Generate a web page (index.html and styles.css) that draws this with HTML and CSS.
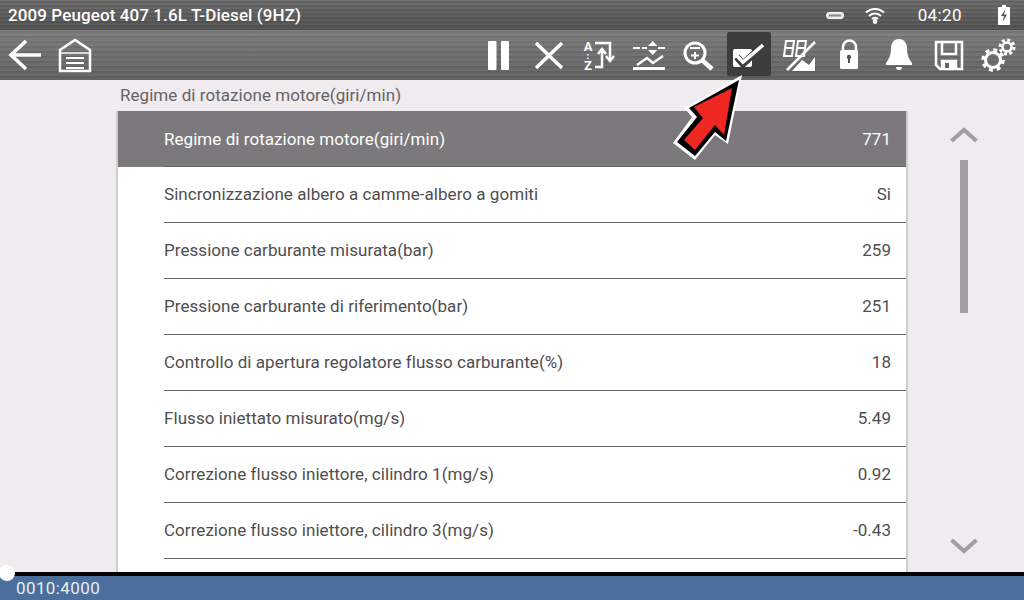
FILE: index.html
```html
<!DOCTYPE html>
<html lang="en">
<head>
    <meta charset="UTF-8">
    <title>Live Data</title>
    <link rel="stylesheet" href="styles.css">
</head>
<body>

    <!-- Status Bar -->
    <div class="status-bar">
        <span class="vehicle">2009 Peugeot 407 1.6L T-Diesel (9HZ)</span>
        <div class="status-right">
            <svg class="st-usb" width="18" height="7" viewBox="0 0 18 7"><rect x="0.7" y="0.7" width="16.6" height="5.6" rx="2.5" fill="#ddd" stroke="#fff" stroke-width="1.2"/><rect x="3" y="2.6" width="12" height="1.8" fill="#8a8a8a"/></svg>
            <svg class="st-wifi" width="20" height="18" viewBox="0 0 20 18" fill="none" stroke="#fff" stroke-width="2"><path d="M1 6.500a13 13 0 0 1 18 0"/><path d="M4 10a8.600 8.600 0 0 1 12 0"/><path d="M7 13a4 4 0 0 1 6 0"/><circle cx="10" cy="15.500" r="2.400" fill="#fff" stroke="none"/></svg>
            <span class="clock">04:20</span>
            <svg class="st-batt" width="12" height="20" viewBox="0 0 12 20"><path d="M4 0h4v2h4v18H0V2h4z" fill="#fff"/><path d="M7.500 4L3 11h3l-1.500 6L9 9.500H6z" fill="#555"/></svg>
        </div>
    </div>

    <!-- Toolbar -->
    <div class="toolbar">
        <div class="tool-group">
            <div class="tool">
                <svg viewBox="0 0 44 44" fill="none" stroke="#fff" stroke-width="3.500"><path d="M38 23H9"/><path d="M23 9L8 23l15 14"/></svg>
            </div>
            <div class="tool">
                <svg viewBox="0 0 44 44" fill="none" stroke="#fff" stroke-width="2.500"><path d="M7 39V18L22 8l15 10v21z"/><path d="M8 21h28" stroke-width="1.500"/><path d="M13 26h18M13 31h18M13 36h18" stroke-width="2"/></svg>
            </div>
        </div>
        <div class="tool-group">
            <div class="tool">
                <svg viewBox="0 0 44 44" fill="#fff"><rect x="11" y="9" width="8.500" height="29" rx="1"/><rect x="24" y="9" width="8" height="29" rx="1"/></svg>
            </div>
            <div class="tool">
                <svg viewBox="0 0 44 44" fill="none" stroke="#fff" stroke-width="3.500"><path d="M9 11l26 25M35 11L9 36"/></svg>
            </div>
            <div class="tool">
                <svg viewBox="0 0 44 44" fill="none" stroke="#fff" stroke-width="2.500"><text x="11" y="19" class="az" text-anchor="middle">A</text><text x="11" y="38" class="az" text-anchor="middle">Z</text><path d="M11 22v1.500M11 25.500v1.500" stroke-width="1.500"/><path d="M18 35h7V19"/><path d="M21 22l4-5 4 5"/><path d="M18 11h15v17"/><path d="M29 24l4 5 4-5"/></svg>
            </div>
            <div class="tool">
                <svg viewBox="0 0 44 44" fill="none" stroke="#fff" stroke-width="2.500"><path d="M6 16h7M15 16h5M31 16h7" stroke-width="2"/><path d="M21 14l4.700-5 4.700 5zM21 18l4.700 5 4.700-5z" fill="#fff" stroke="none"/><path d="M10 33l10-7 6 5 10-7"/><path d="M6 36.500h32" stroke-width="3"/></svg>
            </div>
            <div class="tool">
                <svg viewBox="0 0 44 44" fill="none" stroke="#fff" stroke-width="3"><circle cx="18" cy="21" r="10"/><path d="M25 28l10 9" stroke-width="4.500"/><path d="M13 16h10M18 20v7M14 23.500h8" stroke-width="2"/></svg>
            </div>
            <div class="tool tool-active">
                <svg viewBox="0 0 44 44"><rect x="6" y="17" width="19" height="18" rx="2" fill="#fff"/><path d="M10 25l6 7 20-19" fill="none" stroke="#3d3d3d" stroke-width="7"/><path d="M10 24l6 6 20-17" fill="none" stroke="#fff" stroke-width="3.500"/></svg>
            </div>
            <div class="tool">
                <svg viewBox="0 0 44 44" fill="none" stroke="#fff" stroke-width="2"><path d="M9 9h8l-2 15H7zM8 16h8M21 9h8l-2 15h-8zM20 16h8"/><path d="M10 38L38 10" stroke-width="2.500"/><path d="M15 39l10-11 7 5 6-8v14z" fill="#fff" stroke="none"/></svg>
            </div>
            <div class="tool">
                <svg viewBox="0 0 44 44" fill="none" stroke="#fff" stroke-width="2.500"><path d="M16 19v-4a6 6 0 0 1 13 0v4"/><rect x="13" y="18" width="18" height="19" rx="1.500" fill="#fff" stroke="none"/><circle cx="22" cy="25" r="2.200" fill="#555" stroke="none"/><rect x="21" y="25" width="2" height="6" fill="#555" stroke="none"/></svg>
            </div>
            <div class="tool">
                <svg viewBox="0 0 44 44" fill="#fff"><path d="M22 7c5 0 8 4 8 9 0 7 2 11 5 15v2H9v-2c3-4 5-8 5-15 0-5 3-9 8-9z"/><path d="M19 35h6a3 3 0 0 1-6 0z"/></svg>
            </div>
            <div class="tool">
                <svg viewBox="0 0 44 44" fill="none" stroke="#fff" stroke-width="2.500"><path d="M9 10h26v27H13l-4-4z"/><path d="M15 10v12h14V10"/><path d="M15 37v-8h14v8" fill="#fff"/><rect x="18" y="31" width="4" height="5" fill="#666" stroke="none"/></svg>
            </div>
            <div class="tool">
                <svg viewBox="0 0 44 44" fill="none" stroke="#fff"><circle cx="16" cy="28" r="7.500" stroke-width="3"/><circle cx="16" cy="28" r="10" stroke-width="3.500" stroke-dasharray="3.900 3.950"/><circle cx="30" cy="15" r="4.500" stroke-width="2.500"/><circle cx="30" cy="15" r="7" stroke-width="3" stroke-dasharray="3 2.500"/></svg>
            </div>
        </div>
    </div>

    <!-- Data List -->
    <div class="main">
        <div class="list-area">
            <div class="list-title">Regime di rotazione motore(giri/min)</div>
            <div class="list">
                <div class="row row-selected"><div class="row-inner"><span>Regime di rotazione motore(giri/min)</span><span>771</span></div></div>
                <div class="row"><div class="row-inner"><span>Sincronizzazione albero a camme-albero a gomiti</span><span>Si</span></div></div>
                <div class="row"><div class="row-inner"><span>Pressione carburante misurata(bar)</span><span>259</span></div></div>
                <div class="row"><div class="row-inner"><span>Pressione carburante di riferimento(bar)</span><span>251</span></div></div>
                <div class="row"><div class="row-inner"><span>Controllo di apertura regolatore flusso carburante(%)</span><span>18</span></div></div>
                <div class="row"><div class="row-inner"><span>Flusso iniettato misurato(mg/s)</span><span>5.49</span></div></div>
                <div class="row"><div class="row-inner"><span>Correzione flusso iniettore, cilindro 1(mg/s)</span><span>0.92</span></div></div>
                <div class="row"><div class="row-inner"><span>Correzione flusso iniettore, cilindro 3(mg/s)</span><span>-0.43</span></div></div>
                <div class="row"><div class="row-inner"></div></div>
            </div>
        </div>
        <div class="scroll-col">
            <div class="scroll-top">
                <svg width="28" height="16" viewBox="0 0 28 16" fill="none" stroke="#a09ea0" stroke-width="4"><path d="M1.500 14L14 3l12.500 11"/></svg>
                <div class="scroll-thumb"></div>
            </div>
            <svg width="28" height="16" viewBox="0 0 28 16" fill="none" stroke="#a09ea0" stroke-width="4"><path d="M1.500 2L14 13 26.500 2"/></svg>
        </div>
    </div>

    <!-- Footer -->
    <div class="footer">
        <div class="progress"><div class="knob"></div></div>
        <div class="counter">0010:4000</div>
    </div>

    <!-- Red callout arrow over the screen -->
    <svg class="callout" width="100" height="100" viewBox="0 0 100 100">
        <path d="M82 5L24 38l8 9-19 26 22 17 20-25 13 9z" fill="#fff"/>
        <path d="M79 10L29 38l8 9-20 25 18 14 20-24 11 9z" fill="#000"/>
        <path d="M72 18L34 37l9 11-19 22 11 10 20-25 9 10z" fill="#ee2722"/>
    </svg>

</body>
</html>
```

FILE: styles.css
```css
body {
    margin: 0;
    width: 1024px;
    height: 600px;
    overflow: hidden;
    display: flex;
    flex-direction: column;
    position: relative;
    font-family: Roboto, sans-serif;
    background-color: #efebef;
}

/* Status Bar */
.status-bar {
    height: 30px;
    display: flex;
    justify-content: space-between;
    align-items: center;
    padding: 0 14px 0 8px;
    color: #fff;
    background:
        repeating-linear-gradient(180deg, rgba(255, 255, 255, 0.05) 0 1px, rgba(0, 0, 0, 0.05) 1px 3px, rgba(255, 255, 255, 0.03) 3px 4px),
        linear-gradient(180deg, #696969, #4f4f4f);
}

.vehicle {
    font-size: 17px;
    font-weight: 500;
    letter-spacing: 0.1px;
}

.status-right {
    display: flex;
    align-items: center;
}

.st-usb {
    margin-right: 21px;
}

.st-wifi {
    margin-right: 33px;
}

.clock {
    font-size: 17px;
    letter-spacing: 0.4px;
    margin-right: 36px;
}

/* Toolbar */
.toolbar {
    height: 50px;
    box-sizing: border-box;
    padding: 2px 0 4px;
    display: flex;
    justify-content: space-between;
    background:
        repeating-linear-gradient(180deg, rgba(255, 255, 255, 0.05) 0 1px, rgba(0, 0, 0, 0.05) 1px 3px, rgba(255, 255, 255, 0.03) 3px 5px),
        linear-gradient(180deg, #7c7c7c, #5f5f5f);
}

.tool-group {
    display: flex;
}

.tool {
    width: 44px;
    height: 44px;
    margin: 0 3px;
    border-radius: 2px;
}

.tool svg {
    display: block;
    width: 44px;
    height: 44px;
}

.tool-active {
    background-color: #3d3d3d;
}

.az {
    font-family: Roboto, sans-serif;
    font-size: 13px;
    font-weight: 700;
    fill: #fff;
    stroke: none;
}

/* Data List */
.main {
    flex: 1;
    min-height: 0;
    display: flex;
    padding-left: 116px;
    overflow: hidden;
}

.list-area {
    width: 792px;
    display: flex;
    flex-direction: column;
    min-height: 0;
}

.list-title {
    height: 31px;
    line-height: 31px;
    padding-left: 4px;
    font-size: 17px;
    letter-spacing: 0.05px;
    color: #666366;
}

.list {
    flex: 1;
    overflow: hidden;
    background: #fff;
    border-left: 2px solid #cecece;
    border-right: 2px solid #cecece;
}

.row {
    height: 56px;
    padding-left: 46px;
    font-size: 17px;
    letter-spacing: 0.05px;
    color: #4f4d4f;
}

.row-inner {
    height: 53px;
    padding: 0 15px 2px 0;
    display: flex;
    justify-content: space-between;
    align-items: center;
    border-bottom: 1px solid #666;
}

.row-selected {
    background-color: #7b797b;
    color: #fff;
}

.row-selected .row-inner {
    height: 55px;
    padding-bottom: 0;
}

/* Scroller */
.scroll-col {
    width: 28px;
    margin-left: 42px;
    padding: 47px 0 18px;
    display: flex;
    flex-direction: column;
    justify-content: space-between;
    align-items: center;
}

.scroll-col svg {
    display: block;
}

.scroll-top {
    display: flex;
    flex-direction: column;
    align-items: center;
}

.scroll-thumb {
    width: 8px;
    height: 153px;
    margin-top: 17px;
    background-color: #a09ea0;
}

/* Footer */
.footer {
    flex: none;
}

.progress {
    height: 4px;
    background-color: #000;
    position: relative;
}

.knob {
    position: absolute;
    left: -1px;
    top: -7px;
    width: 16px;
    height: 16px;
    border-radius: 50%;
    background-color: #fff;
}

.counter {
    height: 24px;
    line-height: 25px;
    padding-left: 16px;
    font-size: 17px;
    letter-spacing: 0.4px;
    color: #e8edf3;
    background-color: #4a6f9c;
}

/* Callout */
.callout {
    position: absolute;
    left: 660px;
    top: 70px;
}
```
